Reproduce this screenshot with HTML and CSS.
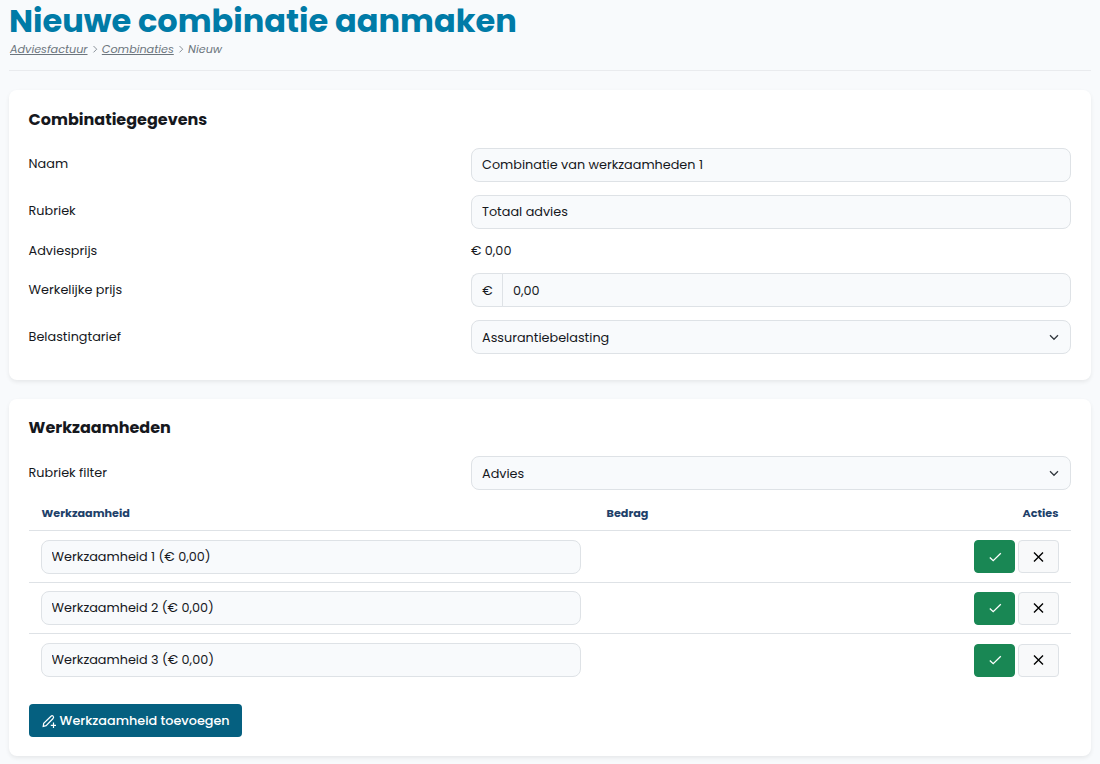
FILE: index.html
```
<!DOCTYPE html>
<html lang="nl">
<head>
    <meta charset="UTF-8">
    <meta name="viewport" content="width=device-width, initial-scale=1.0">
    <title>Nieuwe combinatie aanmaken</title>
    <link rel="stylesheet" href="styles.css">
</head>
<body>
    <svg class="sprite" aria-hidden="true">
        <symbol id="icon-check" viewBox="0 0 14 14">
            <path d="M1.8 7.5 5.2 10.7 12.8 3.3" fill="none" stroke="currentColor" stroke-width="1.3"/>
        </symbol>
        <symbol id="icon-close" viewBox="0 0 14 14">
            <path d="M2 2.5 11 11.5M11 2.5 2 11.5" fill="none" stroke="currentColor" stroke-width="1.4"/>
        </symbol>
        <symbol id="icon-chevron" viewBox="0 0 7 10">
            <path d="M1.5 2 4.7 5.2 1.5 8.4" fill="none" stroke="currentColor" stroke-width="0.8"/>
        </symbol>
    </svg>

    <header class="page-header">
        <h1 class="page-title">Nieuwe combinatie aanmaken</h1>
        <nav class="breadcrumb">
            <a href="#">Adviesfactuur</a>
            <svg class="crumb-icon"><use href="#icon-chevron"/></svg>
            <a href="#">Combinaties</a>
            <svg class="crumb-icon"><use href="#icon-chevron"/></svg>
            <span>Nieuw</span>
        </nav>
    </header>

    <main>
        <section class="card">
            <h2 class="card-title">Combinatiegegevens</h2>
            <div class="form-row">
                <label for="naam">Naam</label>
                <input type="text" id="naam" class="control" value="Combinatie van werkzaamheden 1">
            </div>
            <div class="form-row">
                <label for="rubriek">Rubriek</label>
                <input type="text" id="rubriek" class="control" value="Totaal advies">
            </div>
            <div class="form-row">
                <span>Adviesprijs</span>
                <span>€ 0,00</span>
            </div>
            <div class="form-row low">
                <label for="prijs">Werkelijke prijs</label>
                <div class="input-group">
                    <span class="addon">€</span>
                    <input type="text" id="prijs" class="control" value="0,00">
                </div>
            </div>
            <div class="form-row low">
                <label for="tarief">Belastingtarief</label>
                <select id="tarief" class="control select">
                    <option>Assurantiebelasting</option>
                </select>
            </div>
        </section>

        <section class="card card-work">
            <h2 class="card-title">Werkzaamheden</h2>
            <div class="form-row low">
                <label for="filter">Rubriek filter</label>
                <select id="filter" class="control select">
                    <option>Advies</option>
                </select>
            </div>
            <div class="table">
                <div class="table-row table-head">
                    <span>Werkzaamheid</span>
                    <span>Bedrag</span>
                    <span>Acties</span>
                </div>
                <div class="table-row">
                    <input type="text" class="control" value="Werkzaamheid 1 (€ 0,00)">
                    <span></span>
                    <div class="actions">
                        <button class="btn-icon save"><svg><use href="#icon-check"/></svg></button>
                        <button class="btn-icon"><svg><use href="#icon-close"/></svg></button>
                    </div>
                </div>
                <div class="table-row">
                    <input type="text" class="control" value="Werkzaamheid 2 (€ 0,00)">
                    <span></span>
                    <div class="actions">
                        <button class="btn-icon save"><svg><use href="#icon-check"/></svg></button>
                        <button class="btn-icon"><svg><use href="#icon-close"/></svg></button>
                    </div>
                </div>
                <div class="table-row">
                    <input type="text" class="control" value="Werkzaamheid 3 (€ 0,00)">
                    <span></span>
                    <div class="actions">
                        <button class="btn-icon save"><svg><use href="#icon-check"/></svg></button>
                        <button class="btn-icon"><svg><use href="#icon-close"/></svg></button>
                    </div>
                </div>
            </div>
            <button class="btn-add">
                <svg viewBox="0 0 14 14" fill="none" stroke="currentColor" stroke-width="1.2">
                    <path d="M1.2 12.4 1.7 9.4 9 2.2Q10.1 1.2 11.1 2.2T11.1 4.5L4.1 11.7Z"/>
                    <path d="M11.5 8.5V14M8.8 11.3H14"/>
                </svg>
                <span>Werkzaamheid toevoegen</span>
            </button>
        </section>
    </main>
</body>
</html>
```

FILE: styles.css
```
* {
    box-sizing: border-box;
    margin: 0;
    padding: 0;
}

body {
    padding: 0 9px;
    background-color: #f8fafc;
    color: #16181d;
    font-family: Poppins, Inter, sans-serif;
    font-size: 12.8px;
    line-height: 18px;
}

input, select, button {
    font: inherit;
    color: inherit;
}

.sprite {
    display: none;
}

.page-header {
    height: 71px;
    margin-bottom: 19px;
    border-bottom: 1px solid #e9ebee;
}

.page-title {
    padding-top: 1px;
    color: #007ba7;
    font-size: 32px;
    font-weight: 700;
    line-height: 40px;
    white-space: nowrap;
}

.breadcrumb {
    display: flex;
    align-items: center;
    height: 16px;
    padding-left: 1px;
    color: #6c757d;
    font-size: 11.2px;
    font-style: italic;
}

.breadcrumb a {
    color: inherit;
}

.crumb-icon {
    width: 7px;
    height: 10px;
    margin: 0 3.3px 0 4px;
}

.card {
    height: 290px;
    margin-bottom: 19px;
    padding: 20px 20px 20px 19.6px;
    border-radius: 8px;
    background-color: #fff;
    box-shadow: 0 2px 4px rgba(0, 0, 0, 0.075);
}

.card-work {
    height: 357px;
    padding-top: 19px;
}

.card-title {
    margin-bottom: 18px;
    font-size: 16px;
    font-weight: 700;
    line-height: 20px;
}

.form-row {
    display: grid;
    grid-template-columns: 1fr 600px;
    margin-bottom: 13px;
}

.form-row label {
    padding-top: 7px;
}

.form-row.low label {
    padding-top: 8px;
}

.control {
    width: 100%;
    height: 34px;
    padding: 0 10px;
    border: 1px solid #dee2e6;
    border-radius: 8px;
    background-color: #f8fafc;
}

.low .control {
    padding-top: 2px;
}

.select {
    appearance: none;
    background-image: url("data:image/svg+xml,%3Csvg xmlns='http://www.w3.org/2000/svg' viewBox='0 0 10 7'%3E%3Cpath d='M1 1.3 5 5.3 9 1.3' fill='none' stroke='%23343a40' stroke-width='1.3'/%3E%3C/svg%3E");
    background-repeat: no-repeat;
    background-position: right 11px center;
    background-size: 10px 7px;
}

.input-group {
    display: flex;
}

.addon {
    width: 32px;
    flex: none;
    border: 1px solid #dee2e6;
    border-right: none;
    border-radius: 8px 0 0 8px;
    background-color: #f8fafc;
    line-height: 34px;
    height: 34px;
    text-align: center;
}

.input-group .control {
    margin-left: -1px;
    border-radius: 0 8px 8px 0;
}

.table-row {
    display: grid;
    grid-template-columns: 540px 1fr auto;
    column-gap: 25px;
    align-items: center;
    height: 51.6px;
    padding: 1px 12px 0;
    border-bottom: 1px solid #dee2e6;
}

.table-row:last-child {
    border-bottom: none;
}

.table-head {
    height: 28px;
    padding: 0 12.5px 7px 13px;
    color: #213f69;
    font-size: 11.2px;
    font-weight: 700;
}

.actions {
    display: flex;
    gap: 3px;
}

.btn-icon {
    display: flex;
    align-items: center;
    justify-content: center;
    width: 41px;
    height: 33px;
    border: 1px solid #dee2e6;
    border-radius: 4px;
    background-color: #f8f9fa;
    color: #000;
}

.btn-icon svg {
    width: 14px;
    height: 14px;
}

.btn-icon.save {
    border-color: #198754;
    background-color: #198754;
    color: #fff;
}

.btn-add {
    display: flex;
    align-items: center;
    gap: 4px;
    width: 213px;
    height: 33px;
    margin-top: 18px;
    padding: 2px 12px 0 13px;
    border: none;
    border-radius: 4px;
    background-color: #056080;
    color: #fff;
    font-weight: 500;
    white-space: nowrap;
}

.btn-add svg {
    width: 14px;
    height: 14px;
    flex: none;
}
```
